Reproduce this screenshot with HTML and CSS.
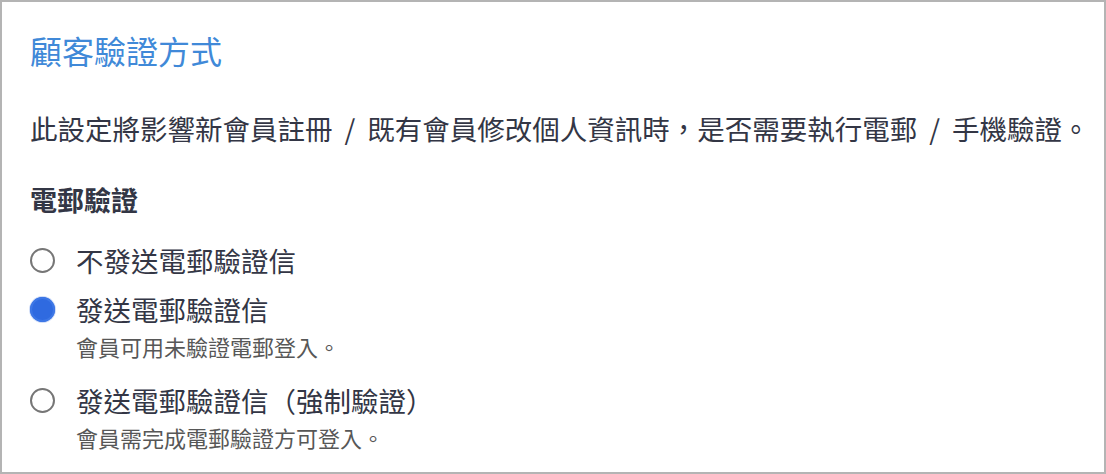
FILE: index.html
```html
<!DOCTYPE html>
<html lang="zh-Hant">
<head>
<meta charset="utf-8">
<link rel="stylesheet" href="styles.css">
</head>
<body>
<div class="panel">
  <h1 class="title">顧客驗證方式</h1>
  <p class="desc">此設定將影響新會員註冊<span class="sep">/</span>既有會員修改個人資訊時，是否需要執行電郵<span class="sep">/</span>手機驗證。</p>
  <h2 class="heading">電郵驗證</h2>
  <div class="options">
    <label class="option">
      <span class="row"><input type="radio" name="email" class="radio"><span class="label">不發送電郵驗證信</span></span>
    </label>
    <label class="option">
      <span class="row"><input type="radio" name="email" class="radio" checked><span class="label">發送電郵驗證信</span></span>
      <span class="hint">會員可用未驗證電郵登入。</span>
    </label>
    <label class="option">
      <span class="row"><input type="radio" name="email" class="radio"><span class="label">發送電郵驗證信（強制驗證）</span></span>
      <span class="hint">會員需完成電郵驗證方可登入。</span>
    </label>
  </div>
</div>
</body>
</html>
```
FILE: styles.css
```css
html, body {
  margin: 0;
  padding: 0;
  background: #ffffff;
}
body {
  font-family: "Noto Sans CJK TC", "Noto Sans", sans-serif;
  color: #333645;
}
.panel {
  box-sizing: border-box;
  width: 1106px;
  height: 474px;
  border: 2px solid #b4b4b4;
  padding: 28px 0 0 28px;
  overflow: hidden;
}
.title {
  margin: 0;
  font-size: 32px;
  line-height: 40px;
  font-weight: 400;
  color: #4089d8;
}
.desc {
  margin: 38px 0 0;
  font-size: 27.5px;
  line-height: 40px;
  white-space: nowrap;
}
.sep {
  padding: 0 12px;
}
.heading {
  margin: 32px 0 0;
  font-size: 27px;
  line-height: 40px;
  font-weight: 700;
}
.options {
  display: flex;
  flex-direction: column;
  margin-top: 20px;
  gap: 9px;
}
.option {
  display: flex;
  flex-direction: column;
}
.option + .option + .option {
  margin-top: 8px;
}
.row {
  display: flex;
  align-items: center;
  gap: 21px;
  height: 40px;
}
.label {
  font-size: 27.5px;
  line-height: 40px;
}
.hint {
  padding-left: 46px;
  font-size: 22px;
  line-height: 34px;
  color: #575757;
}
.radio {
  appearance: none;
  -webkit-appearance: none;
  margin: 0;
  width: 25px;
  height: 25px;
  border-radius: 50%;
  border: 2px solid #767676;
  box-sizing: border-box;
  background: #fff;
  flex: none;
}
.radio:checked {
  border: none;
  background: #2f6ae0;
  box-shadow: inset 0 0 0 2px #3d77e6, 0 0 0 1px #cfdcf7;
}
```
